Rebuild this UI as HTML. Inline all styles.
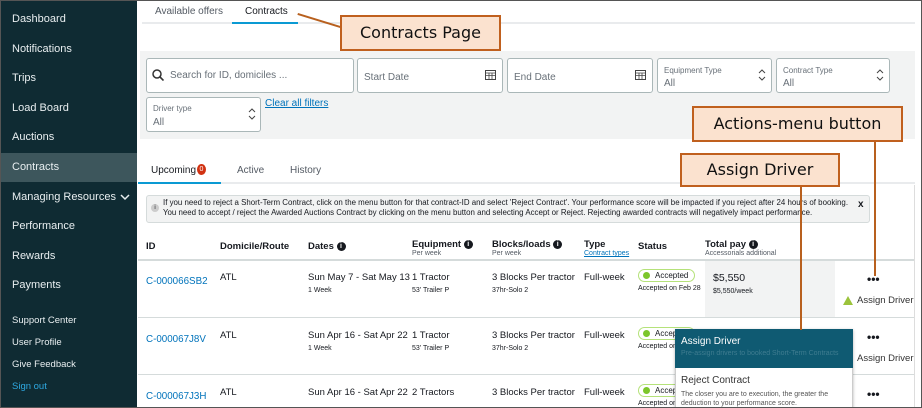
<!DOCTYPE html>
<html><head><meta charset="utf-8"><style>
*{margin:0;padding:0;box-sizing:border-box}
body{width:922px;height:408px;overflow:hidden;background:#fff;font-family:"Liberation Sans",sans-serif;position:relative;color:#16191f}
.a{position:absolute;white-space:nowrap}
#side{left:0;top:0;width:137px;height:408px;background:#0f2b33}
.nav{left:12px;color:#e8eef0;font-size:11px}
.sm{font-size:9.5px}
.box{position:absolute;background:#fff;border:1px solid #aab7b8;border-radius:3px}
.ph{color:#687078;font-size:10px}
.lbl{font-size:8px;color:#687078}
.co{position:absolute;background:#fbe2cf;border:2px solid #c0601e;font-family:"DejaVu Sans","Liberation Sans",sans-serif;color:#111;font-size:16px;text-align:center}
.ln{position:absolute;background:#b8601e}
.hd{font-size:9.5px;font-weight:bold}
.sub{font-size:7px;color:#545b64}
.t{font-size:9.5px;color:#16191f}
.s{font-size:7px;color:#16191f}
.id{font-size:9.8px;color:#0073bb}
.rl{position:absolute;left:138px;width:777px;height:1px;background:#d5dbdb}
.pill{position:absolute;height:13px;border:1px solid #b5e27a;border-radius:7px;font-size:8px;padding:0 6px 0 16px;line-height:11px}
.pill:before{content:"";position:absolute;left:4px;top:2px;width:7px;height:7px;border-radius:50%;background:#7cc62b}
.dots{font-size:12px;font-weight:bold}
.info{display:inline-block;width:9px;height:9px;border-radius:50%;background:#16191f;color:#fff;font-size:7px;text-align:center;line-height:9px;vertical-align:1px}
</style></head><body>
<div class="a" id="side"></div>
<div class="a" style="left:0;top:153px;width:137px;height:29px;background:#3d565c"></div>
<div class="a nav" style="top:13px">Dashboard</div>
<div class="a nav" style="top:43px">Notifications</div>
<div class="a nav" style="top:72px">Trips</div>
<div class="a nav" style="top:102px">Load Board</div>
<div class="a nav" style="top:131px">Auctions</div>
<div class="a nav" style="top:161px">Contracts</div>
<div class="a nav" style="top:191px">Managing Resources</div>
<svg class="a" style="left:120px;top:194px" width="10" height="7"><path d="M1 1l4 4 4-4" stroke="#e8eef0" stroke-width="1.5" fill="none"/></svg>
<div class="a nav" style="top:220px">Performance</div>
<div class="a nav" style="top:250px">Rewards</div>
<div class="a nav" style="top:279px">Payments</div>
<div class="a nav sm" style="top:315px">Support Center</div>
<div class="a nav sm" style="top:337px">User Profile</div>
<div class="a nav sm" style="top:359px">Give Feedback</div>
<div class="a nav sm" style="top:381px;color:#2ea8e0">Sign out</div>

<div class="a" style="left:142px;top:22px;width:773px;height:2px;background:#e9ebed"></div>
<div class="a" style="left:232px;top:22px;width:66px;height:2px;background:#0a9ad3"></div>
<div class="a" style="left:155px;top:6px;font-size:10px;color:#545b64">Available offers</div>
<div class="a" style="left:245px;top:6px;font-size:10px">Contracts</div>

<div class="a" style="left:140px;top:51px;width:775px;height:88px;background:#f2f3f3"></div>
<div class="box" style="left:146px;top:58px;width:208px;height:35px"></div>
<svg class="a" style="left:152px;top:69px" width="12" height="12"><circle cx="5" cy="5" r="4" stroke="#333" stroke-width="1.5" fill="none"/><path d="M8 8l3.5 3.5" stroke="#333" stroke-width="1.6"/></svg>
<div class="a ph" style="left:170px;top:70px">Search for ID, domiciles ...</div>
<div class="box" style="left:357px;top:58px;width:146px;height:35px"></div>
<div class="a ph" style="left:364px;top:72px">Start Date</div>
<div class="box" style="left:507px;top:58px;width:146px;height:35px"></div>
<div class="a ph" style="left:514px;top:72px">End Date</div>
<svg class="a" style="left:485px;top:69px" width="11" height="11"><rect x=".5" y="1.5" width="10" height="9" fill="none" stroke="#444"/><path d="M.5 4h10M.5 6.5h10M4 4v6M7 4v6" stroke="#444" stroke-width=".8"/></svg>
<svg class="a" style="left:635px;top:69px" width="11" height="11"><rect x=".5" y="1.5" width="10" height="9" fill="none" stroke="#444"/><path d="M.5 4h10M.5 6.5h10M4 4v6M7 4v6" stroke="#444" stroke-width=".8"/></svg>
<div class="box" style="left:657px;top:58px;width:115px;height:35px"></div>
<div class="a lbl" style="left:664px;top:66px">Equipment Type</div>
<div class="a ph" style="left:664px;top:78px">All</div>
<div class="box" style="left:776px;top:58px;width:114px;height:35px"></div>
<div class="a lbl" style="left:783px;top:66px">Contract Type</div>
<div class="a ph" style="left:783px;top:78px">All</div>
<div class="box" style="left:146px;top:97px;width:115px;height:35px"></div>
<div class="a lbl" style="left:153px;top:104px">Driver type</div>
<div class="a ph" style="left:153px;top:117px">All</div>
<svg class="a" style="left:758px;top:69px" width="8" height="12"><path d="M1 4l3-3 3 3M1 8l3 3 3-3" stroke="#444" fill="none"/></svg>
<svg class="a" style="left:876px;top:69px" width="8" height="12"><path d="M1 4l3-3 3 3M1 8l3 3 3-3" stroke="#444" fill="none"/></svg>
<svg class="a" style="left:248px;top:108px" width="8" height="12"><path d="M1 4l3-3 3 3M1 8l3 3 3-3" stroke="#444" fill="none"/></svg>
<div class="a" style="left:265px;top:98px;font-size:10px;color:#0073bb;text-decoration:underline">Clear all filters</div>

<div class="a" style="left:138px;top:182px;width:777px;height:2px;background:#e9ebed"></div>
<div class="a" style="left:138px;top:182px;width:83px;height:2px;background:#0a9ad3"></div>
<div class="a" style="left:151px;top:165px;font-size:10px">Upcoming</div>
<div class="a" style="left:197px;top:164px;width:9px;height:11px;border-radius:50%;background:#d13212;color:#fff;font-size:7px;text-align:center;line-height:11px">0</div>
<div class="a" style="left:237px;top:165px;font-size:10px;color:#545b64">Active</div>
<div class="a" style="left:290px;top:165px;font-size:10px;color:#545b64">History</div>

<div class="a" style="left:146px;top:195px;width:724px;height:28px;background:#f2f3f3;border:1px solid #d5dbdb;border-radius:3px"></div>
<div class="a" style="left:151px;top:204px;width:8px;height:8px;border-radius:50%;background:#ccc;font-size:6px;text-align:center;line-height:8px">i</div>
<div class="a" style="left:163px;top:198px;font-size:7.9px;line-height:10px;color:#16191f">If you need to reject a Short-Term Contract, click on the menu button for that contract-ID and select 'Reject Contract'. Your performance score will be impacted if you reject after 24 hours of booking.<br>You need to accept / reject the Awarded Auctions Contract by clicking on the menu button and selecting Accept or Reject. Rejecting awarded contracts will negatively impact performance.</div>
<div class="a" style="left:858px;top:199px;font-size:10px;font-weight:bold">x</div>

<div class="a hd" style="left:146px;top:241px">ID</div>
<div class="a hd" style="left:220px;top:241px">Domicile/Route</div>
<div class="a hd" style="left:308px;top:241px">Dates <span class="info">i</span></div>
<div class="a hd" style="left:412px;top:239px">Equipment <span class="info">i</span></div>
<div class="a sub" style="left:412px;top:250px">Per week</div>
<div class="a hd" style="left:492px;top:239px">Blocks/loads <span class="info">i</span></div>
<div class="a sub" style="left:492px;top:250px">Per week</div>
<div class="a hd" style="left:584px;top:239px">Type</div>
<div class="a sub" style="left:584px;top:250px;color:#0073bb;text-decoration:underline">Contract types</div>
<div class="a hd" style="left:638px;top:241px">Status</div>
<div class="a hd" style="left:705px;top:239px">Total pay <span class="info">i</span></div>
<div class="a sub" style="left:705px;top:250px">Accessorials additional</div>
<div class="rl" style="top:259px;height:2px"></div>
<div class="a" style="left:705px;top:261px;width:130px;height:56px;background:#f2f3f3"></div>
<div class="rl" style="top:317px"></div>
<div class="rl" style="top:374px"></div>

<div class="a id" style="left:146px;top:276px">C-000066SB2</div>
<div class="a t" style="left:220px;top:272px">ATL</div>
<div class="a t" style="left:308px;top:272px">Sun May 7 - Sat May 13</div>
<div class="a s" style="left:308px;top:287px">1 Week</div>
<div class="a t" style="left:412px;top:272px">1 Tractor</div>
<div class="a s" style="left:412px;top:287px">53' Trailer P</div>
<div class="a t" style="left:492px;top:272px">3 Blocks Per tractor</div>
<div class="a s" style="left:492px;top:287px">37hr-Solo 2</div>
<div class="a t" style="left:584px;top:272px">Full-week</div>
<div class="pill" style="left:638px;top:269px">Accepted</div>
<div class="a s" style="left:638px;top:285px">Accepted on Feb 28</div>
<div class="a" style="left:713px;top:272px;font-size:10.5px">$5,550</div>
<div class="a s" style="left:713px;top:288px">$5,550/week</div>
<div class="a dots" style="left:867px;top:272px">•••</div>
<svg class="a" style="left:843px;top:296px" width="10" height="9"><path d="M5 0L10 9H0z" fill="#9bc33b"/></svg>
<div class="a" style="left:857px;top:295px;font-size:9.5px;color:#333">Assign Driver</div>

<div class="a id" style="left:146px;top:334px">C-000067J8V</div>
<div class="a t" style="left:220px;top:330px">ATL</div>
<div class="a t" style="left:308px;top:330px">Sun Apr 16 - Sat Apr 22</div>
<div class="a s" style="left:308px;top:345px">1 Week</div>
<div class="a t" style="left:412px;top:330px">1 Tractor</div>
<div class="a s" style="left:412px;top:345px">53' Trailer P</div>
<div class="a t" style="left:492px;top:330px">3 Blocks Per tractor</div>
<div class="a s" style="left:492px;top:345px">37hr-Solo 2</div>
<div class="a t" style="left:584px;top:330px">Full-week</div>
<div class="pill" style="left:638px;top:327px">Accepted</div>
<div class="a s" style="left:638px;top:343px">Accepted on</div>
<div class="a dots" style="left:867px;top:330px">•••</div>
<div class="a" style="left:857px;top:353px;font-size:9.5px;color:#333">Assign Driver</div>

<div class="a id" style="left:146px;top:391px">C-000067J3H</div>
<div class="a t" style="left:220px;top:387px">ATL</div>
<div class="a t" style="left:308px;top:387px">Sun Apr 16 - Sat Apr 22</div>
<div class="a t" style="left:412px;top:387px">2 Tractors</div>
<div class="a t" style="left:492px;top:387px">3 Blocks Per tractor</div>
<div class="a t" style="left:584px;top:387px">Full-week</div>
<div class="pill" style="left:638px;top:384px">Accepted</div>
<div class="a s" style="left:638px;top:400px">Accepted on</div>
<div class="a dots" style="left:867px;top:387px">•••</div>

<div class="a" style="left:675px;top:329px;width:178px;height:79px;background:#fff;border:1px solid #ccc;box-shadow:0 1px 3px rgba(0,0,0,.3)"></div>
<div class="a" style="left:675px;top:329px;width:178px;height:39px;background:#0f5a72"></div>
<div class="a" style="left:681px;top:336px;font-size:10px;color:#fff">Assign Driver</div>
<div class="a" style="left:681px;top:350px;font-size:7px;color:#3f7c90">Pre-assign drivers to booked Short-Term Contracts</div>
<div class="a" style="left:681px;top:375px;font-size:10px;color:#333">Reject Contract</div>
<div class="a" style="left:681px;top:390px;font-size:7px;line-height:9px;color:#555">The closer you are to execution, the greater the<br>deduction to your performance score.</div>

<div class="a" style="left:914px;top:185px;width:1px;height:223px;background:#ddd"></div>

<div class="ln" style="left:298px;top:13px;width:46px;height:2px;transform-origin:0 0;transform:rotate(17deg)"></div>
<div class="co" style="left:340px;top:15px;width:161px;height:36px;line-height:31px">Contracts Page</div>
<div class="ln" style="left:874px;top:141px;width:2px;height:135px"></div>
<div class="co" style="left:692px;top:106px;width:211px;height:36px;line-height:31px">Actions-menu button</div>
<div class="ln" style="left:800px;top:186px;width:2px;height:144px"></div>
<div class="co" style="left:680px;top:153px;width:160px;height:34px;line-height:29px">Assign Driver</div>

<div class="a" style="left:0;top:0;width:922px;height:408px;border:1px solid #555;pointer-events:none"></div>
</body></html>
